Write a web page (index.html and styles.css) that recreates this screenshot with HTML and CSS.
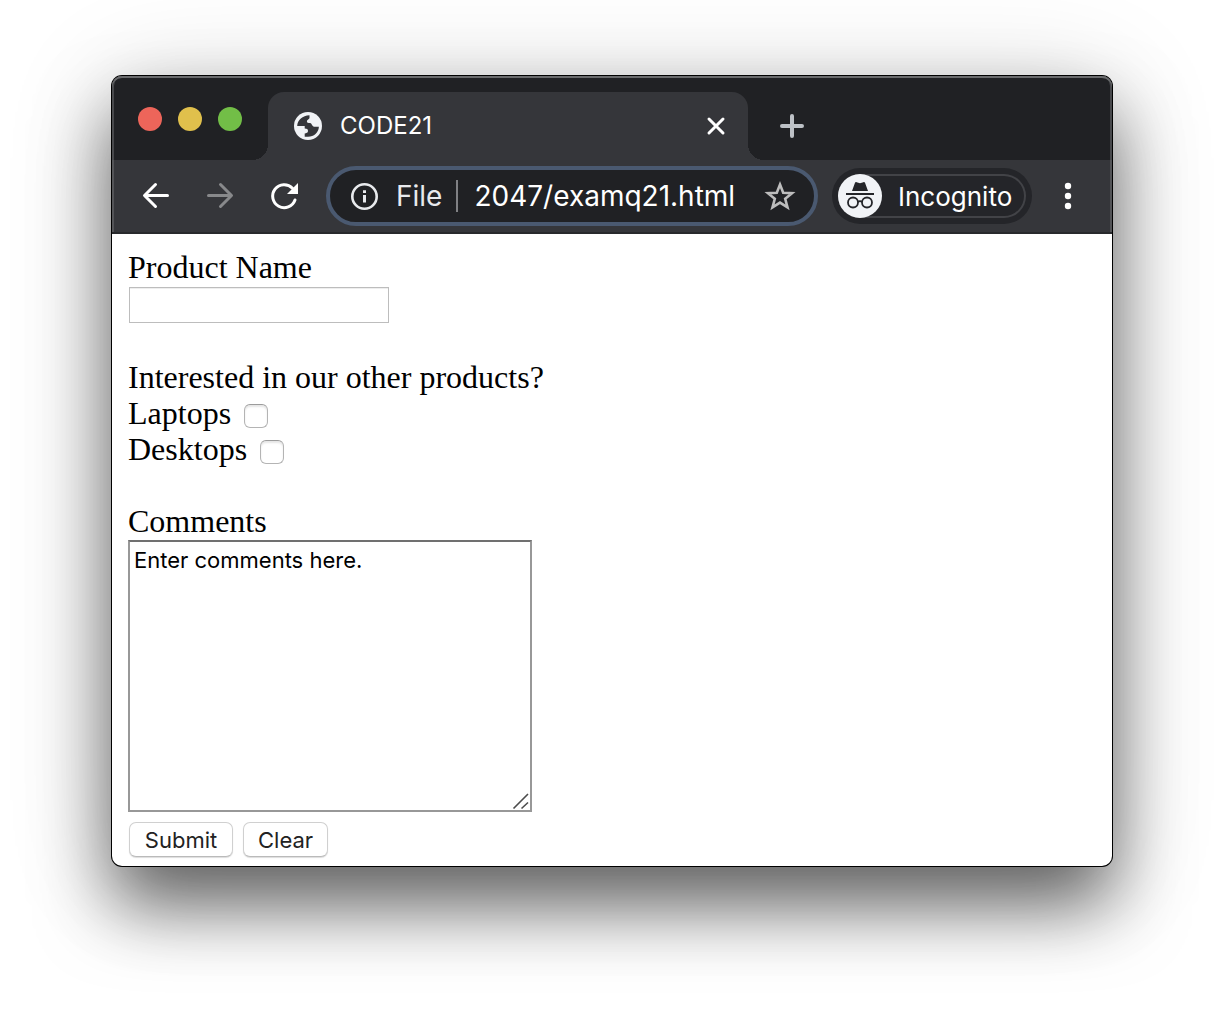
FILE: index.html
```html
<!DOCTYPE html>
<html lang="en">
<head>
<meta charset="utf-8">
<title>CODE21</title>
<link rel="stylesheet" href="styles.css">
</head>
<body>
<div class="window">
  <header class="chrome">
    <div class="tab-strip">
      <div class="lights">
        <button class="light light-close" type="button" aria-label="Close window"></button>
        <button class="light light-minimize" type="button" aria-label="Minimize window"></button>
        <button class="light light-zoom" type="button" aria-label="Zoom window"></button>
      </div>
      <div class="tab">
        <svg class="globe" viewBox="0 0 28 28" aria-hidden="true">
          <circle cx="14" cy="14" r="14" fill="#f1f3f6"/>
          <path d="M3.200 14C3.500 8 8.500 3.600 15.500 3.300V6c0 1.400-2.600 1.600-2.600 3.200 0 1.500 1.200 1.800 3.200 1.800 1.700 0 2 3.600 4 3.800h4.800c-.3 6-5 10-10.900 10h-3.300v-3.300c1.500-.3 3.300-.6 3.300-2.500 0-2.100-1.200-2.400-3.300-2.500V14z" fill="#35363a"/>
        </svg>
        <span class="tab-title">CODE21</span>
        <button class="icon-button" type="button" aria-label="Close tab">
          <svg width="32" height="32" viewBox="0 0 32 32"><path d="M9 9l14 14M23 9L9 23" stroke="#fff" stroke-width="3" stroke-linecap="round"/></svg>
        </button>
      </div>
      <button class="icon-button new-tab" type="button" aria-label="New tab">
        <svg width="32" height="32" viewBox="0 0 32 32"><path d="M16 6v20M6 16h20" stroke="#bdc1c6" stroke-width="4" stroke-linecap="round"/></svg>
      </button>
    </div>
    <div class="toolbar">
      <nav class="history">
        <button class="icon-button" type="button" aria-label="Back">
          <svg width="32" height="32" viewBox="0 0 32 32" fill="none" stroke="#fff" stroke-width="3" stroke-linecap="round" stroke-linejoin="round"><path d="M27.500 15.500H5M15.500 4.500l-11 11 11 11"/></svg>
        </button>
        <button class="icon-button" type="button" aria-label="Forward">
          <svg width="32" height="32" viewBox="0 0 32 32" fill="none" stroke="#88898b" stroke-width="3" stroke-linecap="round" stroke-linejoin="round"><path d="M4.500 15.500H27M16.500 4.500l11 11-11 11"/></svg>
        </button>
        <button class="icon-button" type="button" aria-label="Reload">
          <svg width="32" height="32" viewBox="0 0 32 32"><path d="M27 20A11.500 11.500 0 1 1 24.500 8.200" fill="none" stroke="#fff" stroke-width="3" stroke-linecap="round"/><path d="M30 3v11H19z" fill="#fff"/></svg>
        </button>
      </nav>
      <div class="omnibox">
        <svg class="info" viewBox="0 0 28 28" aria-hidden="true"><circle cx="14.500" cy="14.500" r="12.200" fill="none" stroke="#e8eaed" stroke-width="2.600"/><path d="M13 13h3v7.500h-3zM13 8.300h3v2.800h-3z" fill="#e8eaed"/></svg>
        <span class="scheme">File</span>
        <input class="url" type="text" value="2047/examq21.html" aria-label="Address">
        <button class="icon-button" type="button" aria-label="Bookmark this page">
          <svg width="32" height="32" viewBox="0 0 32 32"><path d="M16 4.500l3.200 8.200 8.900.5-6.900 5.600 2.300 8.600-7.500-4.800-7.500 4.800 2.300-8.600-6.900-5.600 8.900-.5z" fill="none" stroke="#bdbdbd" stroke-width="2.600"/></svg>
        </button>
      </div>
      <div class="incognito">
        <div class="incognito-pill">
          <svg class="avatar" viewBox="0 0 44 44" aria-hidden="true">
            <circle cx="22" cy="22" r="22" fill="#f1f3f6"/>
            <path d="M17 8.800c.3-.7.9-.9 1.600-.6l3.400 1 3.400-1c.7-.3 1.300-.1 1.600.6L30 17H14zM8 19h28v2H8z" fill="#242529"/>
            <g fill="none" stroke="#242529" stroke-width="1.800"><circle cx="15" cy="28.500" r="5"/><circle cx="29" cy="28.500" r="5"/><path d="M20 28c1-1 3-1 4 0"/></g>
          </svg>
          <span>Incognito</span>
        </div>
      </div>
      <button class="icon-button menu" type="button" aria-label="Menu">
        <svg width="32" height="32" viewBox="0 0 32 32" fill="#fff"><circle cx="16" cy="6" r="3.200"/><circle cx="16" cy="16" r="3.200"/><circle cx="16" cy="26" r="3.200"/></svg>
      </button>
    </div>
  </header>
  <main class="page">
    <form>
      <div class="field field-name">
        <label for="product">Product Name</label>
        <input class="text-input" id="product" type="text">
      </div>
      <fieldset class="field">
        <legend>Interested in our other products?</legend>
        <div class="choice"><label for="laptops">Laptops</label><input class="check" id="laptops" type="checkbox"></div>
        <div class="choice"><label for="desktops">Desktops</label><input class="check" id="desktops" type="checkbox"></div>
      </fieldset>
      <div class="comments">
        <label for="comments">Comments</label>
        <div class="textarea-wrap">
          <textarea id="comments">Enter comments here.</textarea>
          <svg class="grip" width="18" height="18" viewBox="0 0 18 18" aria-hidden="true"><path d="M1.500 16.500L16 2M9.500 16.500l6.500-6" stroke="#4c4c4c" stroke-width="1.600"/></svg>
        </div>
      </div>
      <div class="actions">
        <button class="push push-submit" type="submit">Submit</button>
        <button class="push" type="reset">Clear</button>
      </div>
    </form>
  </main>
</div>
</body>
</html>
```
FILE: styles.css
```css
* {
  box-sizing: border-box;
}

body {
  margin: 0;
  min-height: 100vh;
  padding: 76px 112px 148px;
  display: flex;
  background: #fff;
  color: #000;
  font-family: Inter, Roboto, sans-serif;
}

.window {
  flex: 1;
  min-width: 0;
  display: flex;
  flex-direction: column;
  border-radius: 10px;
  background: #fff;
  box-shadow: 0 0 0 1px #000, 0 40px 72px rgba(0, 0, 0, 0.58), 0 8px 110px rgba(0, 0, 0, 0.16);
}

.chrome {
  border-radius: 10px 10px 0 0;
  background: #202124;
  box-shadow: inset 0 2px 0 #6a6b6d, inset 2px 0 0 #48494c, inset -2px 0 0 #48494c;
}

button {
  font: inherit;
  margin: 0;
}

.icon-button {
  flex: none;
  width: 32px;
  height: 32px;
  padding: 0;
  border: 0;
  background: none;
}

.icon-button svg {
  display: block;
}

.tab-strip {
  display: flex;
  align-items: flex-end;
  height: 84px;
  padding-left: 26px;
}

.lights {
  display: flex;
  gap: 16px;
  margin: 0 26px 29px 0;
}

.light {
  width: 24px;
  height: 24px;
  padding: 0;
  border: 0;
  border-radius: 50%;
}

.light-close {
  background: #ed655a;
}

.light-minimize {
  background: #e0c04c;
}

.light-zoom {
  background: #72be47;
}

.tab {
  position: relative;
  flex: 0 1 480px;
  height: 68px;
  display: flex;
  align-items: center;
  padding: 0 16px 0 26px;
  border-radius: 16px 16px 0 0;
  background: #35363a;
  color: #fff;
  font-size: 24px;
  line-height: 32px;
}

.tab::before,
.tab::after {
  content: "";
  position: absolute;
  bottom: 0;
  width: 16px;
  height: 16px;
}

.tab::before {
  right: 100%;
  background: radial-gradient(circle at 0 0, transparent 16px, #35363a 16px);
}

.tab::after {
  left: 100%;
  background: radial-gradient(circle at 100% 0, transparent 16px, #35363a 16px);
}

.globe {
  flex: none;
  width: 28px;
  height: 28px;
  margin-right: 18px;
}

.tab-title {
  flex: 1;
}

.new-tab {
  margin: 0 0 18px 28px;
}

.toolbar {
  display: flex;
  align-items: center;
  height: 74px;
  padding: 0 28px;
  border-bottom: 2px solid #28292c;
  background: #35363a;
  box-shadow: inset 2px 0 0 #535457, inset -2px 0 0 #535457;
}

.history {
  display: flex;
  gap: 32px;
}

.omnibox {
  flex: 1;
  min-width: 0;
  height: 60px;
  display: flex;
  align-items: center;
  margin: 0 14px 0 26px;
  padding: 0 18px 0 20px;
  border: 4px solid #4a5970;
  border-radius: 30px;
  background: #202124;
  color: #e8eaed;
  font-size: 28px;
  line-height: 32px;
}

.info {
  flex: none;
  width: 28px;
  height: 28px;
  margin-right: 18px;
}

.scheme {
  padding-right: 14px;
  border-right: 2px solid #808184;
}

.url {
  flex: 1;
  min-width: 0;
  height: 40px;
  padding: 0 0 0 16px;
  border: 0;
  outline: 0;
  background: none;
  color: #fff;
  font: inherit;
}

.incognito {
  flex: none;
  padding: 6px;
  border-radius: 28px;
  background: #242529;
  color: #fff;
  font-size: 26px;
}

.incognito-pill {
  width: 188px;
  height: 44px;
  display: flex;
  align-items: center;
  gap: 16px;
  border-radius: 22px;
  box-shadow: inset 0 0 0 2px #424347;
}

.avatar {
  flex: none;
  width: 44px;
  height: 44px;
}

.menu {
  margin-left: 20px;
}

.page {
  padding: 15px 16px 9px;
  font-family: "Liberation Serif", "Times New Roman", serif;
  font-size: 32px;
  line-height: 36px;
}

.field {
  margin: 0 0 36px;
  padding: 0;
  border: 0;
}

label,
legend {
  padding: 0;
}

.field-name label,
.comments label {
  display: block;
}

.text-input {
  display: block;
  width: 260px;
  height: 36px;
  margin: 2px 1px 1px;
  padding: 2px 4px;
  border: 1px solid #bdbdbd;
  border-radius: 0;
  box-shadow: inset 0 1px 0 #eee;
  font-family: Inter, sans-serif;
  font-size: 22px;
  outline: 0;
}

.choice {
  display: flex;
  align-items: center;
  gap: 13px;
}

.check {
  appearance: none;
  width: 24px;
  height: 24px;
  margin: 6px 0 0;
  border: 1px solid #b4b4b4;
  border-top-color: #9c9c9c;
  border-radius: 6px;
  background: #fff;
  box-shadow: inset 0 2px 2px #e6e6e6;
}

.textarea-wrap {
  position: relative;
  width: 404px;
  max-width: 100%;
  margin-top: 1px;
}

textarea {
  display: block;
  width: 100%;
  height: 272px;
  margin: 0;
  padding: 4px;
  border: 2px solid #989898;
  border-top-color: #707070;
  border-radius: 0;
  outline: 0;
  resize: none;
  font-family: Inter, sans-serif;
  font-size: 22px;
  line-height: 28px;
}

.grip {
  position: absolute;
  right: 2px;
  bottom: 2px;
}

.actions {
  display: flex;
  gap: 10px;
  padding: 10px 1px 0;
}

.push {
  height: 35px;
  padding: 0 14px;
  border: 1px solid #d0d0d0;
  border-bottom-color: #bababa;
  border-radius: 7px;
  background: #fff;
  box-shadow: 0 1px 1px #ddd;
  color: #222;
  font-family: Inter, sans-serif;
  font-size: 22px;
  line-height: 32px;
}

.push-submit {
  min-width: 104px;
}
```
